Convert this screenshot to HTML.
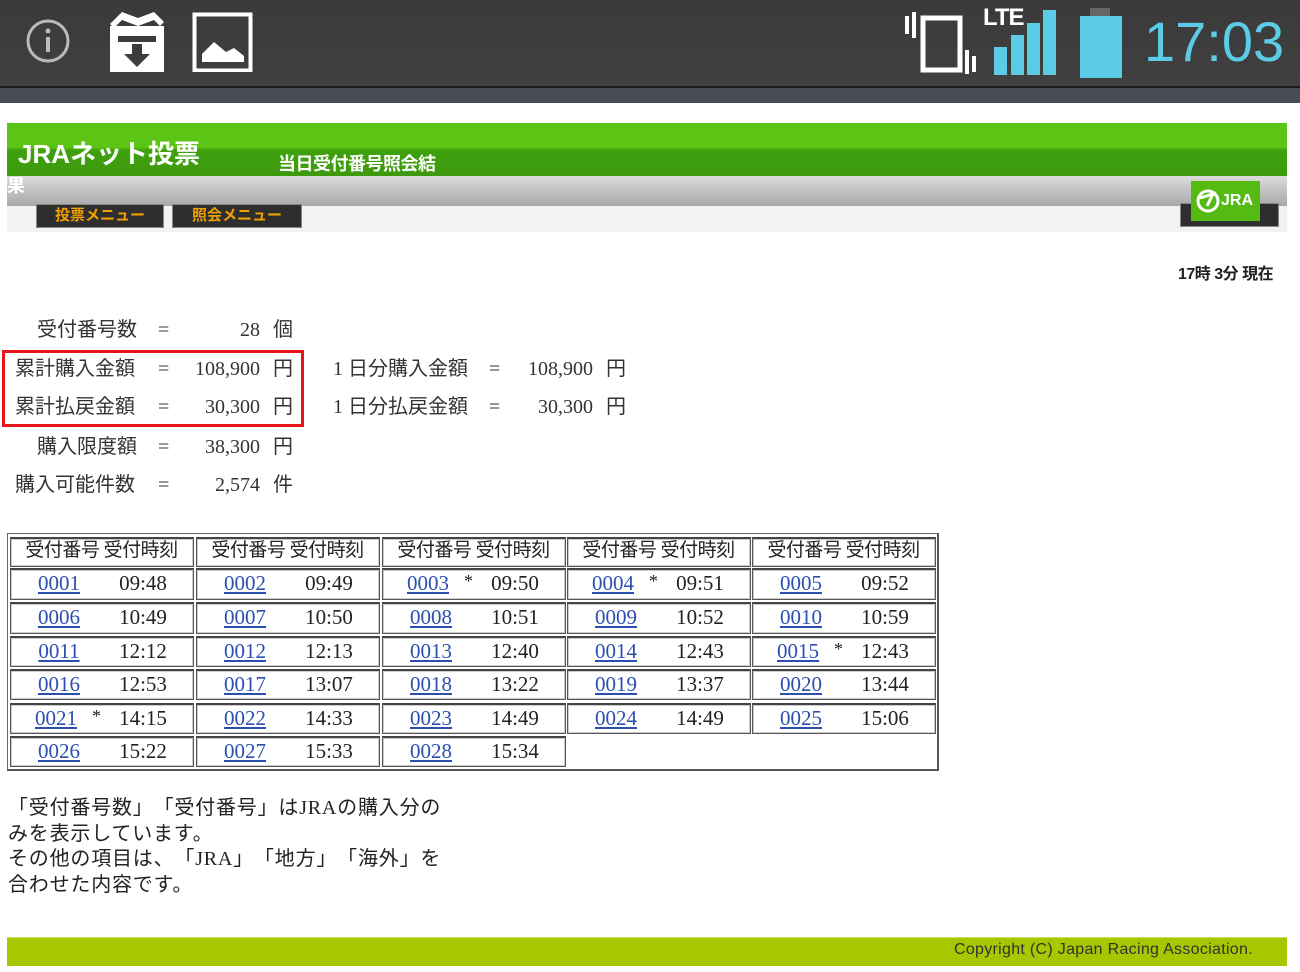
<!DOCTYPE html>
<html><head><meta charset="utf-8">
<style>
*{margin:0;padding:0;box-sizing:border-box}
body{width:1300px;height:972px;position:relative;background:#fff;overflow:hidden;font-family:"Liberation Sans","Noto Sans CJK JP",sans-serif;color:#222;text-spacing-trim:space-all}
.a{position:absolute;white-space:nowrap}
.sb{position:absolute;left:0;top:0;width:1300px;height:86px;background:linear-gradient(#3a3a3a,#404040)}
.sb2{position:absolute;left:0;top:86px;width:1300px;height:17px;background:#474c56;border-top:2px solid #1a1a1a}
.lbl{font-family:"Liberation Serif","Noto Sans CJK JP",sans-serif;font-size:20px;line-height:26px;color:#333}
.cell{position:absolute;border:1px solid #555;border-top:2px solid #444;box-shadow:inset 0 0 0 1px #ccc}
.n{position:absolute;width:70px;text-align:center;font-family:"Liberation Serif",serif;font-size:21px;color:#2a4fb0;text-decoration:underline;line-height:24px}
.t{position:absolute;width:80px;text-align:center;font-family:"Liberation Serif",serif;font-size:21px;color:#222;line-height:24px}
.st{position:absolute;font-family:"Liberation Serif",serif;font-size:18px;color:#222;line-height:18px}
.h{position:absolute;font-family:"Liberation Serif","Noto Sans CJK JP",sans-serif;font-size:19px;color:#222;line-height:26px;width:183px;text-align:center;letter-spacing:-0.5px}
</style></head><body>
<div class="sb"></div><div class="sb2"></div>
<svg class="a" style="left:24px;top:16px" width="50" height="50"><circle cx="24" cy="25" r="20" fill="none" stroke="#bbb" stroke-width="3"/><rect x="22" y="21" width="4" height="15" fill="#bbb"/><circle cx="24" cy="15" r="2.5" fill="#bbb"/></svg>
<svg class="a" style="left:104px;top:8px" width="64" height="66"><path d="M6 16 L18 4 L34 10 L50 4 L60 14 L56 18 L50 12 L34 18 L18 12 L10 20Z" fill="#fff"/><rect x="6" y="18" width="54" height="46" fill="#fff"/><rect x="14" y="28" width="38" height="6" fill="#3c3c3c"/><path d="M28 36h10v10h8l-13 13l-13-13h8z" fill="#3c3c3c"/></svg>
<svg class="a" style="left:192px;top:12px" width="62" height="60"><rect x="2.5" y="2.5" width="56" height="56" fill="none" stroke="#fff" stroke-width="4"/><path d="M10 50 L10 42 L22 30 L34 40 L42 36 L52 44 L52 50Z" fill="#fff"/></svg>
<svg class="a" style="left:905px;top:8px" width="80" height="70"><rect x="0" y="8" width="4" height="18" fill="#fff"/><rect x="7" y="4" width="4" height="26" fill="#fff"/><rect x="18" y="10" width="37" height="52" fill="none" stroke="#fff" stroke-width="5"/><rect x="60" y="42" width="4" height="24" fill="#fff"/><rect x="67" y="48" width="4" height="16" fill="#fff"/></svg>
<div class="a" style="left:983px;top:4px;font-size:24px;font-weight:bold;color:#fff;letter-spacing:-1px">LTE</div>
<svg class="a" style="left:992px;top:8px" width="72" height="70"><rect x="2" y="39" width="13" height="28" fill="#5bcbe6"/><rect x="19" y="27" width="13" height="40" fill="#5bcbe6"/><rect x="35" y="15" width="13" height="52" fill="#5bcbe6"/><rect x="51" y="2" width="13" height="65" fill="#5bcbe6"/></svg>
<svg class="a" style="left:1078px;top:8px" width="48" height="70"><rect x="12" y="0" width="20" height="8" fill="#666"/><rect x="2" y="8" width="42" height="67" fill="#5bcbe6"/></svg>
<div class="a" style="left:1144px;top:12px;font-size:56px;color:#5bcbe6;line-height:60px">17:03</div>
<div class="a" style="left:7px;top:123px;width:1280px;height:54px;background:linear-gradient(#5cc414 0%,#5cc414 45%,#3fa10e 50%,#3d9a0d 100%)"></div>
<div class="a" style="left:7px;top:176px;width:1280px;height:30px;background:linear-gradient(#dcdcdc,#c4c4c4 45%,#a9a9a9)"></div>
<div class="a" style="left:7px;top:206px;width:1280px;height:26px;background:#f2f2f2"></div>
<div class="a" style="left:18px;top:134px;font-size:26px;font-weight:bold;color:#fff;letter-spacing:0px">JRAネット投票</div>
<div class="a" style="left:278px;top:150px;font-size:18px;font-weight:bold;color:#fff;letter-spacing:-0.5px">当日受付番号照会結</div>
<div class="a" style="left:7px;top:172px;font-size:18px;font-weight:bold;color:#fff">果</div>
<div class="a" style="left:36px;top:204px;width:128px;height:24px;background:#2e2e2e;border:1px solid #888;color:#f0a000;font-size:15px;font-weight:bold;text-align:center;line-height:22px">投票メニュー</div>
<div class="a" style="left:172px;top:204px;width:130px;height:24px;background:#2e2e2e;border:1px solid #888;color:#f0a000;font-size:15px;font-weight:bold;text-align:center;line-height:22px">照会メニュー</div>
<div class="a" style="left:1180px;top:203px;width:99px;height:24px;background:#2e2e2e;border:1px solid #888"></div>
<div class="a" style="left:1191px;top:181px;width:69px;height:40px;background:#55bb12;color:#fff;font-size:16px;font-weight:bold;line-height:40px;padding-left:4px">
<svg style="vertical-align:middle" width="26" height="26"><circle cx="13" cy="13" r="10" fill="none" stroke="#fff" stroke-width="3"/><path d="M5 10 L18 6 L12 18" fill="none" stroke="#fff" stroke-width="3"/></svg>JRA</div>
<div class="a" style="left:1178px;top:260px;font-size:16px;font-weight:bold;color:#222;letter-spacing:-0.5px">17時 3分 現在</div>
<div class="a lbl" style="left:37px;top:317px">受付番号数</div>
<div class="a lbl" style="left:15px;top:356px">累計購入金額</div>
<div class="a lbl" style="left:15px;top:394px">累計払戻金額</div>
<div class="a lbl" style="left:37px;top:434px">購入限度額</div>
<div class="a lbl" style="left:15px;top:472px">購入可能件数</div>
<div class="a lbl" style="left:158px;top:317px">=</div><div class="a lbl" style="left:158px;top:356px">=</div><div class="a lbl" style="left:158px;top:394px">=</div><div class="a lbl" style="left:158px;top:434px">=</div><div class="a lbl" style="left:158px;top:472px">=</div>
<div class="a lbl" style="left:180px;top:317px;width:80px;text-align:right">28</div>
<div class="a lbl" style="left:160px;top:356px;width:100px;text-align:right">108,900</div>
<div class="a lbl" style="left:160px;top:394px;width:100px;text-align:right">30,300</div>
<div class="a lbl" style="left:160px;top:434px;width:100px;text-align:right">38,300</div>
<div class="a lbl" style="left:160px;top:472px;width:100px;text-align:right">2,574</div>
<div class="a lbl" style="left:273px;top:317px">個</div><div class="a lbl" style="left:273px;top:356px">円</div><div class="a lbl" style="left:273px;top:394px">円</div><div class="a lbl" style="left:273px;top:434px">円</div><div class="a lbl" style="left:273px;top:472px">件</div>
<div class="a" style="left:2px;top:350px;width:302px;height:77px;border:3px solid #e8141c"></div>
<div class="a lbl" style="left:333px;top:356px">1 日分購入金額</div>
<div class="a lbl" style="left:333px;top:394px">1 日分払戻金額</div>
<div class="a lbl" style="left:489px;top:356px">=</div><div class="a lbl" style="left:489px;top:394px">=</div>
<div class="a lbl" style="left:493px;top:356px;width:100px;text-align:right">108,900</div>
<div class="a lbl" style="left:493px;top:394px;width:100px;text-align:right">30,300</div>
<div class="a lbl" style="left:606px;top:356px">円</div><div class="a lbl" style="left:606px;top:394px">円</div>
<div class="a" style="left:7px;top:533px;width:932px;height:238px;border:1px solid #666;border-right:2px solid #555;border-bottom:2px solid #555"></div>
<div id="tb"></div>
<script>
var cx=[10,196,382,567,752],rows=[[568,600],[602,634],[636,667],[669,700],[703,734],[736,767]];
var d=[["0001","09:48",0],["0002","09:49",0],["0003","09:50",1],["0004","09:51",1],["0005","09:52",0],
["0006","10:49",0],["0007","10:50",0],["0008","10:51",0],["0009","10:52",0],["0010","10:59",0],
["0011","12:12",0],["0012","12:13",0],["0013","12:40",0],["0014","12:43",0],["0015","12:43",1],
["0016","12:53",0],["0017","13:07",0],["0018","13:22",0],["0019","13:37",0],["0020","13:44",0],
["0021","14:15",1],["0022","14:33",0],["0023","14:49",0],["0024","14:49",0],["0025","15:06",0],
["0026","15:22",0],["0027","15:33",0],["0028","15:34",0]];
var h="";
for(var c=0;c<5;c++){h+='<div class="cell" style="left:'+cx[c]+'px;top:537px;width:184px;height:30px"></div><div class="h" style="left:'+cx[c]+'px;top:538px">受付番号 受付時刻</div>';}
d.forEach(function(e,i){var r=Math.floor(i/5),c=i%5,x=cx[c],y=rows[r][0],hh=rows[r][1]-y;
h+='<div class="cell" style="left:'+x+'px;top:'+y+'px;width:184px;height:'+hh+'px"></div>';
h+='<div class="n" style="left:'+(x+14-(e[2]?3:0))+'px;top:'+(y+3)+'px">'+e[0]+'</div>';
if(e[2])h+='<div class="st" style="left:'+(x+82)+'px;top:'+(y+4)+'px">*</div>';
h+='<div class="t" style="left:'+(x+93)+'px;top:'+(y+3)+'px">'+e[1]+'</div>';});
document.getElementById("tb").innerHTML=h;
</script>
<div class="a" style="left:8px;top:796px;font-family:'Liberation Serif','Noto Sans CJK JP',sans-serif;font-size:20px;line-height:25.5px;color:#222;white-space:normal;width:480px;letter-spacing:0.8px">「受付番号数」「受付番号」はJRAの購入分の<br>みを表示しています。<br>その他の項目は、「JRA」「地方」「海外」を<br>合わせた内容です。</div>
<div class="a" style="left:7px;top:937px;width:1280px;height:29px;background:#a6c800;border-top:1px solid #c8e060"></div>
<div class="a" style="left:954px;top:941px;font-size:16px;color:#333;letter-spacing:0.3px">Copyright (C) Japan Racing Association.</div>
</body></html>
